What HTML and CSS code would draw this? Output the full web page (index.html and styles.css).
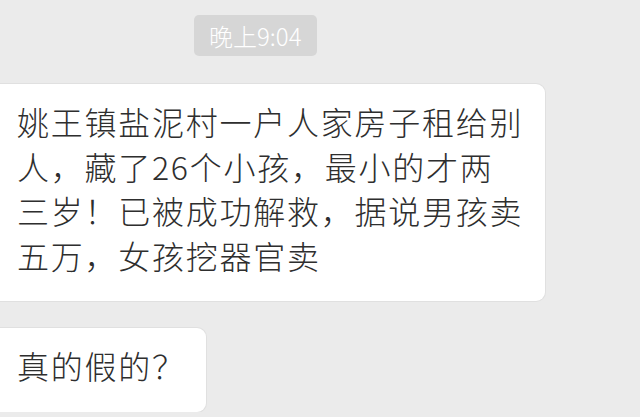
FILE: index.html
```html
<!DOCTYPE html>
<html lang="zh-CN">
<head>
    <meta charset="UTF-8">
    <meta name="viewport" content="width=device-width, initial-scale=1.0">
    <title>聊天</title>
    <link rel="stylesheet" href="styles.css">
</head>
<body>

<div class="chat">
    <div class="time-row">
        <span class="time">晚上9:04</span>
    </div>

    <div class="msg">
        <div class="bubble">姚王镇盐泥村一户人家房子租给别人，藏了26个小孩，最小的才两三岁！已被成功解救，据说男孩卖五万，女孩挖器官卖</div>
    </div>

    <div class="msg">
        <div class="bubble">真的假的？</div>
    </div>
</div>

</body>
</html>
```

FILE: styles.css
```css
body {
    margin: 0;
    background-color: #ebebeb;
    font-family: "Noto Sans CJK SC", "Noto Sans", sans-serif;
    color: #2e2e2e;
    overflow: hidden;
}
.chat {
    padding-top: 15px;
}
.time-row {
    padding-left: 194px;
    margin-bottom: 28px;
}
.time {
    display: inline-block;
    background-color: #d6d6d6;
    color: #fff;
    font-size: 24px;
    font-weight: 300;
    line-height: 41px;
    padding: 0 15px;
    border-radius: 5px;
}
.msg {
    display: flex;
    margin-bottom: 27px;
}
.msg:last-child {
    margin-bottom: 0;
}
.bubble {
    background-color: #fff;
    max-width: 508px;
    padding: 15px 20px 24px 17px;
    font-size: 32px;
    font-weight: 300;
    letter-spacing: 1.75px;
    line-height: 44.5px;
    border-radius: 0 9px 9px 0;
    box-shadow: 0 0 0 1px #e0e0e0;
}
```
